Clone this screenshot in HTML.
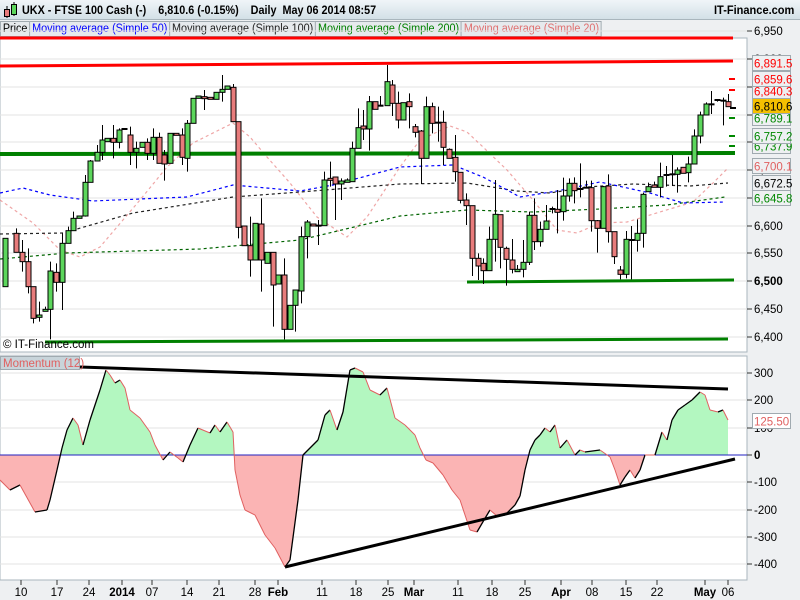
<!DOCTYPE html>
<html><head><meta charset="utf-8">
<style>
*{margin:0;padding:0;box-sizing:border-box}
body{width:800px;height:600px;overflow:hidden;background:#eef0f2;font-family:"Liberation Sans",Arial,sans-serif;position:relative}
#hdr{position:absolute;left:0;top:0;width:800px;height:20px;background:linear-gradient(#f0f5f8,#d3e0e7);border-bottom:1px solid #a9b6bd}
#hdr .t{position:absolute;left:22px;top:3px;font-size:12px;font-weight:bold;color:#000;white-space:pre;transform:scaleX(0.9);transform-origin:0 0}
#hdr .r{position:absolute;right:6px;top:3px;font-size:12px;font-weight:bold;transform:scaleX(0.92);transform-origin:100% 0}
#leg{position:absolute;left:0;top:21px;height:16px;display:flex;transform:scaleX(0.94);transform-origin:0 0}
#leg span{font-size:11.5px;border:1px solid #a0aab0;background:#e6eaed;padding:0 2px;height:16px;line-height:14px;margin-right:-1px;white-space:nowrap}
svg{position:absolute;left:0;top:0}
</style></head><body>
<div id="hdr"><svg width="20" height="20" style="left:2px;top:1px"><line x1="5" y1="5" x2="5" y2="17" stroke="#000"/><rect x="2.5" y="8.5" width="5" height="7" fill="#e87c7c" stroke="#000"/><line x1="12" y1="1" x2="12" y2="15" stroke="#000"/><rect x="9.5" y="3.5" width="5" height="10" fill="#5cd65c" stroke="#000"/></svg><div class="t">UKX - FTSE 100 Cash (-)    6,810.6 (-0.15%)    Daily  May 06 2014 08:57</div><div class="r">IT-Finance.com</div></div>
<div id="leg"><span>Price</span><span style="color:#0000ff">Moving average (Simple 50)</span><span style="color:#222">Moving average (Simple 100)</span><span style="color:#008000">Moving average (Simple 200)</span><span style="color:#e07070">Moving average (Simple 20)</span></div>
<svg id="s" width="800" height="600" style="top:0"></svg>
<script>
var S=document.getElementById('s'),h='';
h+='<rect x="0" y="38" width="747" height="314" fill="#fff" stroke="#a9b6bd"/>';
h+='<rect x="0" y="356" width="747" height="224" fill="#fff" stroke="#a9b6bd"/>';
h+='<line x1="0" y1="38" x2="747" y2="38" stroke="#a9b6bd"/>';
var gp=[[6950,31],[6900,59],[6850,87],[6800,115],[6750,142],[6700,170],[6650,198],[6600,226],[6550,253],[6500,281],[6450,309],[6400,337]];
gp.forEach(function(g){h+='<line x1="0" y1="'+g[1]+'" x2="752" y2="'+g[1]+'" stroke="#e3e3e3"/><line x1="747" y1="'+g[1]+'" x2="752" y2="'+g[1]+'" stroke="#333"/>';
 if(g[1]>40) h+='<text x="754" y="'+(g[1]+4)+'" font-size="11.5" '+(g[0]==6500?'font-weight="bold"':'')+'>'+(g[0]+'').replace(/^(\d)/,'$1,')+'</text>';});
h+='<line x1="747" y1="31" x2="752" y2="31" stroke="#333"/><text x="754" y="35" font-size="11.5">6,950</text>';
function pl(p,c,o){return '<polyline points="'+p+'" fill="none" stroke="'+c+'" stroke-width="1.2" stroke-dasharray="3,3" opacity="'+(o||1)+'"/>';}
h+=pl('0,200 33,223 60,250 80,257 100,247 117,227 140,200 167,167 193,143 233,123 250,137 267,157 290,183 317,217 347,237 367,217 400,167 420,140 450,126 467,132 483,147 507,170 533,200 557,230 577,233 600,223 627,222 660,212 693,202 713,183 728,168','#e88080',0.7);
h+=pl('0,259 67,253 200,249 300,240 400,216 467,210 533,212 600,209 667,205 725,197','#006400');
h+=pl('0,234 63,233 133,213 233,197 300,192 400,184 467,183 517,191 550,193 587,187 633,184 690,186 728,183','#222');
h+=pl('0,193 23,188 50,195 93,201 187,197 233,185 300,191 333,185 400,167 453,165 483,177 520,197 557,191 600,182 650,193 683,203 725,202','#0000ff');
h+='<line x1="0" y1="38" x2="733" y2="38" stroke="#f00" stroke-width="3"/>';
h+='<line x1="0" y1="66" x2="733" y2="61" stroke="#f00" stroke-width="3"/>';
h+='<line x1="0" y1="154" x2="735" y2="153" stroke="#008000" stroke-width="4"/>';
h+='<line x1="467" y1="282" x2="734" y2="280" stroke="#008000" stroke-width="3"/>';
h+='<line x1="45" y1="342" x2="728" y2="339" stroke="#008000" stroke-width="3"/>';
var A=[[15,535,680,'g'],[48,520,577,'r',505],[67,577,605,'r',540,635],[85,605,680,'r',565,700],[100,680,775,'r',680,790],[117,765,772,'g',725,785],[135,748,752,'g',740],[150,633,748,'g',605,838],[168,637,667,'r',610,695],[186,550,667,'g',520,750],[203,512,550,'g',500],[220,475,512,'g',455],[237,468,475,'g'],[255,367,468,'g',345,470],[270,303,367,'g',300],[290,277,303,'g',255],[307,240,277,'g',195,300],[322,235,245,'g'],[340,235,247,'r',195,295],[357,210,247,'g',205,265],[373,207,207,'d'],[390,225,277,'r',200,315],[408,265,277,'g',245,325],[427,247,262,'g'],[442,247,280,'r',235,300],[460,232,280,'g',205,300],[478,232,310,'r',218],[493,285,312,'r',270,362],[510,220,310,'g'],[528,220,225,'r'],[545,225,292,'r',205,315],[562,190,295,'g',180,335],[580,115,190,'g'],[595,108,115,'g'],[612,110,115,'r',90,150],[630,112,118,'r'],[648,97,118,'g'],[665,88,97,'g',45,125],[682,78,88,'g'],[700,82,185,'r',72],[714,185,502,'r',185,535],[733,498,557,'r'],[750,557,600,'r',470,650],[766,490,600,'g'],[784,492,600,'r',415,695],[802,577,610,'g'],[818,577,675,'r',577,800],[835,645,672,'g'],[852,645,808,'r',595,838],[870,736,808,'g'],[886,690,736,'g',690,815],[904,530,693,'g',500,730],[921,486,530,'g',480,595],[938,492,498,'r'],[955,497,497,'d',480,555],[972,360,497,'g',335],[990,355,360,'r',305,380],[1005,351,372,'r',350,480],[1022,363,372,'g',355,420],[1040,360,367,'g',355],[1056,265,365,'g',245],[1075,203,265,'g',145],[1090,198,207,'r',150,240],[1108,125,207,'g',108,272],[1125,125,148,'r'],[1140,137,137,'d',108],[1160,65,137,'g',15],[1177,75,130,'r',60,168],[1195,130,180,'r',95,205]];
var B=[[8,128,180,'g'],[28,125,140,'r',100,205],[45,200,217,'r',192,232],[63,213,295,'r',210,372],[78,140,295,'g',110],[97,140,190,'r',128,220],[115,188,188,'d',140,245],[130,187,262,'r',152,315],[148,268,295,'r',265],[165,292,335,'r',225,365],[181,337,421,'r',337,430],[198,420,437,'r',400,495],[217,437,595,'r',437,648],[235,595,618,'r',580,660],[250,610,632,'r',595,672],[268,538,632,'g',500],[285,463,538,'g',360,605],[300,464,562,'r',464,625],[318,565,598,'r',560,677],[337,600,628,'r',537,640],[352,628,635,'g',615],[370,607,628,'g',540,652],[388,466,607,'g',455,615],[403,466,545,'r',415,570],[420,508,545,'g',485,560],[438,483,508,'g',435],[455,447,447,'d',440,460],[472,448,457,'r',390,520],[490,408,455,'g',353,482],[507,370,408,'g',355,425],[523,370,392,'r',352,430],[540,387,387,'d',310,412],[557,383,383,'d',362],[573,383,482,'r',362,515],[592,482,505,'r',480,578],[610,380,505,'g',378],[625,378,515,'r',343,548],[643,515,590,'r',515,612],[660,630,643,'r',618,658],[678,538,643,'g',513,655],[693,540,540,'d',498,658],[712,520,541,'g',478,575],[730,403,520,'g',398,563],[745,380,395,'g',368],[763,375,382,'r',365],[780,350,382,'g',308,412],[797,345,345,'d',318,380],[815,343,343,'d',285,378],[832,330,343,'g',322,398],[850,322,340,'r'],[865,312,338,'g',290,367],[883,228,312,'g',208],[900,165,228,'g',155,250],[917,132,165,'g',127],[934,133,133,'d',93,162],[950,120,120,'d',117,125],[968,122,122,'d',113,196],[985,125,140,'r',102]];
function cd(x,t,b,c,wt,wb){wt=wt===undefined?t:wt;wb=wb===undefined?b:wb;
 var s='<line x1="'+x+'" y1="'+Math.min(wt,t)+'" x2="'+x+'" y2="'+Math.max(wb,b)+'" stroke="#000"/>';
 if(c=='d') s+='<line x1="'+(x-3)+'" y1="'+t+'" x2="'+(x+3)+'" y2="'+t+'" stroke="#000" stroke-width="2"/>';
 else s+='<rect x="'+(x-2.5)+'" y="'+t+'" width="5" height="'+Math.max(b-t,2)+'" fill="'+(c=='g'?'#5cd65c':'#e87c7c')+'" stroke="#000"/>';
 return s;}
A.forEach(function(a){h+=cd(Math.round(a[0]/3)+.5,a[1]/3+60,a[2]/3+60,a[3],a[4]===undefined?undefined:a[4]/3+60,a[5]===undefined?undefined:a[5]/3+60);});
B.forEach(function(a){h+=cd(Math.round(a[0]/3+400)+.5,a[1]/3+60,a[2]/3+60,a[3],a[4]===undefined?undefined:a[4]/3+60,a[5]===undefined?undefined:a[5]/3+60);});
h+='<line x1="730" y1="108" x2="736" y2="108" stroke="#000" stroke-width="2"/>';
[[79,'#f00'],[90,'#f00'],[118,'#080'],[136,'#080'],[146,'#080']].forEach(function(t){h+='<line x1="729" y1="'+t[0]+'" x2="735" y2="'+t[0]+'" stroke="'+t[1]+'" stroke-width="2"/>';});
function bx(y,txt,col,bg){return '<rect x="752.5" y="'+(y-7.5)+'" width="38" height="15" fill="'+bg+'" stroke="#a0aab0"/><text x="754" y="'+(y+4.5)+'" font-size="11.5" fill="'+col+'">'+txt+'</text>';}
h+=bx(63,'6,891.5','#f00','#eef0f2')+bx(91,'6,840.3','#f00','#eef0f2')+bx(79,'6,859.6','#f00','#eef0f2')+bx(118,'6,789.1','#080','#eef0f2')+bx(106,'6,810.6','#000','#f5c000')+bx(146,'6,737.9','#080','#eef0f2')+bx(136,'6,757.2','#080','#eef0f2')+bx(166,'6,700.1','#e06060','#eef0f2')+bx(183,'6,672.5','#000','#eef0f2')+bx(198,'6,645.8','#080','#eef0f2');
h+='<text x="3" y="348" font-size="11.5">© IT-Finance.com</text>';
[[300,373],[200,400],[100,428],[-100,482],[-200,510],[-300,537],[-400,564]].forEach(function(g){h+='<line x1="0" y1="'+g[1]+'" x2="752" y2="'+g[1]+'" stroke="#e3e3e3"/><line x1="747" y1="'+g[1]+'" x2="752" y2="'+g[1]+'" stroke="#333"/><text x="754" y="'+(g[1]+4)+'" font-size="11.5">'+g[0]+'</text>';});
h+='<line x1="747" y1="455" x2="752" y2="455" stroke="#333"/><text x="754" y="459" font-size="11.5" font-weight="bold">0</text>';
var M=[[0,480],[10,490],[20,485],[35,512],[47,510],[50,500],[57,470],[62,448],[67,430],[73,418],[78,425],[83,445],[90,420],[100,390],[106,370],[110,375],[115,383],[120,380],[125,388],[130,410],[140,418],[150,432],[155,445],[163,460],[170,452],[178,458],[183,462],[190,445],[198,428],[210,433],[215,425],[220,432],[227,422],[233,432],[235,470],[240,495],[245,510],[255,515],[265,535],[275,548],[285,567],[290,560],[298,500],[303,455],[318,440],[325,415],[330,410],[337,430],[343,412],[350,370],[355,368],[363,372],[370,390],[380,395],[387,388],[395,418],[405,425],[415,435],[420,448],[426,460],[433,463],[443,475],[452,490],[460,500],[470,530],[477,532],[484,520],[490,510],[497,516],[505,515],[515,505],[520,496],[525,470],[530,450],[535,440],[540,435],[545,428],[550,432],[555,425],[560,448],[567,440],[575,455],[580,450],[585,452],[600,450],[610,457],[615,470],[620,485],[625,477],[630,470],[635,478],[640,470],[645,455],[655,455],[662,432],[667,440],[672,420],[678,410],[685,405],[692,400],[700,392],[705,395],[710,410],[718,412],[723,410],[728,420]];
var pts=M.map(function(p){return p.join(',')}).join(' ');
h+='<defs><clipPath id="ca"><rect x="0" y="356" width="747" height="99"/></clipPath><clipPath id="cb"><rect x="0" y="455" width="747" height="125"/></clipPath></defs>';
var poly='<polygon points="0,455 '+pts+' 728,455" ';
h+=poly+'fill="#b3f7c0" clip-path="url(#ca)"/>'+poly+'fill="#fbb4b4" clip-path="url(#cb)"/>';
h+='<line x1="0" y1="455" x2="747" y2="455" stroke="#2020c0"/>';
for(var i=1;i<M.length;i++){var up=M[i][1]<M[i-1][1];h+='<line x1="'+M[i-1][0]+'" y1="'+M[i-1][1]+'" x2="'+M[i][0]+'" y2="'+M[i][1]+'" stroke="'+(up?'#000':'#e06060')+'" stroke-width="'+(up?1.3:1)+'"/>';}
h+='<line x1="80" y1="367" x2="728" y2="389" stroke="#000" stroke-width="3"/>';
h+='<line x1="285" y1="567" x2="735" y2="459" stroke="#000" stroke-width="3"/>';
h+='<rect x="0.5" y="356.5" width="79" height="13" fill="#c8d4da" stroke="#a0aab0"/><text x="3" y="367" font-size="11.5" fill="#e06060">Momentum (12)</text>';
h+=bx(421,'125.50','#e06060','#fff');
h+='<line x1="0" y1="580" x2="747" y2="580" stroke="#a9b6bd"/>';
[['10',21],['17',57],['24',89],['2014',122,1],['07',152],['14',187],['21',219],['28',255],['Feb',278,1],['11',322],['18',356],['25',388],['Mar',414,1],['11',458],['18',492],['25',525],['Apr',561,1],['08',592],['15',626],['22',657],['May',705,1],['06',728]].forEach(function(l){h+='<line x1="'+l[1]+'" y1="580" x2="'+l[1]+'" y2="585" stroke="#333"/><text x="'+l[1]+'" y="596" font-size="11.5" text-anchor="middle" '+(l[2]?'font-weight="bold"':'')+'>'+l[0]+'</text>';});
S.innerHTML=h;
</script>
</body></html>
